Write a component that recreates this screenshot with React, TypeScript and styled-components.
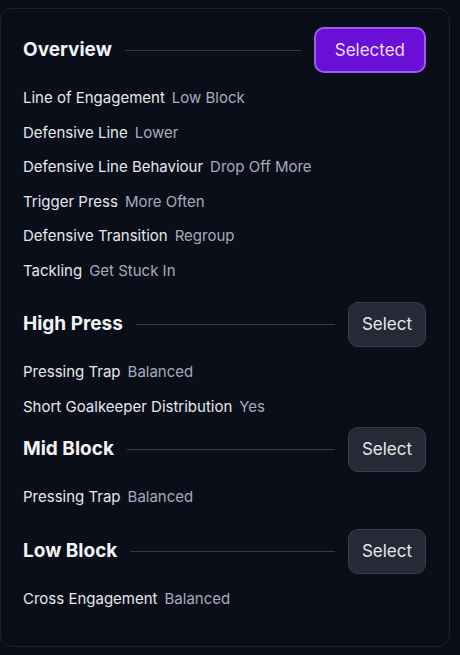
import { createGlobalStyle, styled } from 'styled-components';

const GlobalStyle = createGlobalStyle`
  html, body {
    margin: 0;
    background: #0a0e18;
    font-family: Inter, "Noto Sans", sans-serif;
  }
`;

const Page = styled.div`
  padding: 8px 10px 10px 0;
`;

const Card = styled.div`
  width: 450px;
  box-sizing: border-box;
  border: 1px solid #1e2230;
  border-radius: 12px;
  background: #0a0e18;
  padding: 18px 23px 37px 22px;
  display: flex;
  flex-direction: column;
`;

const Section = styled.section<{ $gap: number }>`
  margin-top: ${(p) => p.$gap}px;
  &:first-child { margin-top: 0; }
`;

const Header = styled.div`
  display: flex;
  align-items: center;
  gap: 13px;
`;

const Title = styled.h2`
  margin: 0;
  font-size: 19px;
  line-height: 22px;
  padding-bottom: 1px;
  font-weight: 700;
  color: #f3f4f6;
`;

const Rule = styled.div`
  flex: 1;
  height: 1px;
  background: #363b4a;
`;

const Button = styled.button<{ $active?: boolean }>`
  font-family: inherit;
  font-size: 17px;
  height: ${(p) => (p.$active ? 46 : 45)}px;
  padding: 0 ${(p) => (p.$active ? 19 : 13)}px;
  border-radius: 10px;
  cursor: pointer;
  color: ${(p) => (p.$active ? '#ecdffc' : '#e5e7eb')};
  background: ${(p) => (p.$active ? '#6a0fd6' : '#262936')};
  border: ${(p) => (p.$active ? '2px solid #9d5cf0' : '1px solid #3a3e4c')};
`;

const Rows = styled.div`
  display: flex;
  flex-direction: column;
  gap: 14.6px;
  margin-top: 15px;
`;

const Row = styled.div`
  font-size: 15px;
  line-height: 20px;
  display: flex;
  gap: 7px;
  white-space: nowrap;
`;

const Label = styled.span`
  color: #e6e8ee;
`;

const Value = styled.span`
  color: #a6abbd;
`;

type Item = [string, string];

const sections: { title: string; active?: boolean; gap: number; items: Item[] }[] = [
  {
    title: 'Overview',
    active: true,
    gap: 0,
    items: [
      ['Line of Engagement', 'Low Block'],
      ['Defensive Line', 'Lower'],
      ['Defensive Line Behaviour', 'Drop Off More'],
      ['Trigger Press', 'More Often'],
      ['Defensive Transition', 'Regroup'],
      ['Tackling', 'Get Stuck In'],
    ],
  },
  {
    title: 'High Press',
    gap: 21,
    items: [
      ['Pressing Trap', 'Balanced'],
      ['Short Goalkeeper Distribution', 'Yes'],
    ],
  },
  {
    title: 'Mid Block',
    gap: 10,
    items: [['Pressing Trap', 'Balanced']],
  },
  {
    title: 'Low Block',
    gap: 22,
    items: [['Cross Engagement', 'Balanced']],
  },
];

export default function App() {
  return (
    <Page>
      <GlobalStyle />
      <Card>
        {sections.map((s) => (
          <Section key={s.title} $gap={s.gap}>
            <Header>
              <Title>{s.title}</Title>
              <Rule />
              <Button $active={s.active}>{s.active ? 'Selected' : 'Select'}</Button>
            </Header>
            <Rows>
              {s.items.map(([k, v]) => (
                <Row key={k}>
                  <Label>{k}</Label>
                  <Value>{v}</Value>
                </Row>
              ))}
            </Rows>
          </Section>
        ))}
      </Card>
    </Page>
  );
}
